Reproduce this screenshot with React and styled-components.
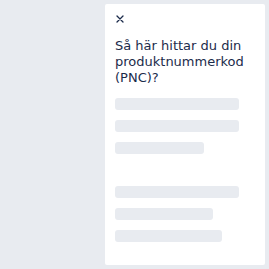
import React from "react";
import styled, { createGlobalStyle } from "styled-components";

const GlobalStyle = createGlobalStyle`
  html, body {
    margin: 0;
    padding: 0;
    background: #e8ebf0;
    font-family: "DejaVu Sans", "Liberation Sans", sans-serif;
  }
`;

const Page = styled.div`
  width: 269px;
  height: 269px;
  box-sizing: border-box;
  padding: 4px;
  display: flex;
  justify-content: flex-end;
`;

const Drawer = styled.aside`
  width: 160px;
  height: 261px;
  box-sizing: border-box;
  background: #ffffff;
  border-radius: 2px;
  padding: 10px 10px 0 10px;
  display: flex;
  flex-direction: column;
`;

const CloseButton = styled.button`
  width: 10px;
  height: 10px;
  padding: 0;
  margin: 0;
  border: none;
  background: none;
  display: flex;
  align-items: center;
  justify-content: center;
  cursor: pointer;
`;

const Title = styled.h2`
  margin: 14px 0 0 0;
  font-size: 13px;
  line-height: 16px;
  font-weight: normal;
  color: #1b2b4b;
`;

const SkeletonGroup = styled.div`
  display: flex;
  flex-direction: column;
  gap: 10px;
  margin-top: ${(p) => p.$top}px;
`;

const Bar = styled.div`
  height: 12px;
  width: ${(p) => p.$w}px;
  border-radius: 3px;
  background: #e8ebf0;
`;

const CloseIcon = () => (
  <svg width="8" height="8" viewBox="0 0 8 8">
    <path d="M1 1L7 7M7 1L1 7" stroke="#1b2b4b" strokeWidth="1.3" strokeLinecap="round" />
  </svg>
);

export default function App() {
  return (
    <>
      <GlobalStyle />
      <Page>
        <Drawer>
          <CloseButton aria-label="Stäng">
            <CloseIcon />
          </CloseButton>
          <Title>Så här hittar du din produktnummerkod (PNC)?</Title>
          <SkeletonGroup $top={12}>
            <Bar $w={124} />
            <Bar $w={124} />
            <Bar $w={89} />
          </SkeletonGroup>
          <SkeletonGroup $top={32}>
            <Bar $w={124} />
            <Bar $w={98} />
            <Bar $w={107} />
          </SkeletonGroup>
        </Drawer>
      </Page>
    </>
  );
}
